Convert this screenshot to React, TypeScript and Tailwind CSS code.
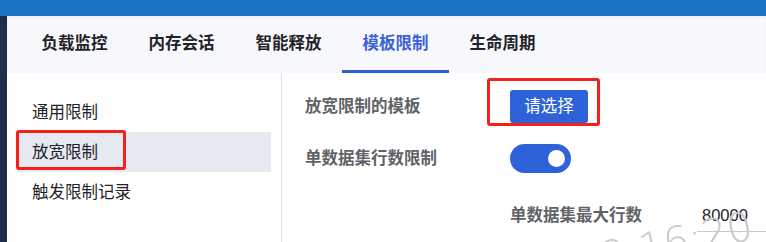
import React from 'react';

const tabs = ['负载监控', '内存会话', '智能释放', '模板限制', '生命周期'];
const menu = ['通用限制', '放宽限制', '触发限制记录'];

export default function App() {
  const active = '模板限制';
  const selected = '放宽限制';

  return (
    <div className="relative w-[766px] h-[242px] overflow-hidden bg-white flex flex-col font-['Liberation_Sans','Noto_Sans_CJK_SC',sans-serif]">
      {/* top bar */}
      <div className="h-4 shrink-0 bg-[#1b74c5]" />

      <div className="flex flex-1 min-h-0">
        <div className="w-[7px] shrink-0 bg-[#1f2d4b]" />

        <div className="flex-1 flex flex-col min-w-0">
          {/* tabs */}
          <div className="h-[57px] shrink-0 bg-[#f7f8fc] flex pl-[14px] shadow-[inset_0_2px_2px_rgba(0,0,0,0.04)]">
            {tabs.map((t) => (
              <div
                key={t}
                className={`px-[20.5px] flex items-center text-[16.5px] font-bold border-b-[3px] ${
                  t === active ? 'text-[#3a62d6] border-[#2d5fd9]' : 'text-[#1f2329] border-transparent'
                }`}
              >
                {t}
              </div>
            ))}
          </div>

          <div className="flex flex-1 min-h-0">
            {/* side menu */}
            <div className="w-[275px] shrink-0 border-r border-[#dcdfe6] pt-[19px] px-[10px]">
              {menu.map((m) => (
                <div
                  key={m}
                  className={`h-10 flex items-center pl-[15px] text-[16.5px] text-[#1f2329] ${
                    m === selected ? 'bg-[#e6e9f0]' : ''
                  }`}
                >
                  {m}
                </div>
              ))}
            </div>

            {/* form */}
            <div className="flex-1 pl-[23px] pt-[17px] text-[16.5px]">
              <div className="flex items-center h-[33px]">
                <span className="w-[205px] font-bold text-[#5f6368]">放宽限制的模板</span>
                <button className="w-[78px] h-[33px] rounded-[3px] bg-[#2d62d9] text-white text-[16.5px]">请选择</button>
              </div>

              <div className="flex items-center h-[29px] mt-[21px]">
                <span className="w-[205px] font-bold text-[#5f6368]">单数据集行数限制</span>
                <div className="w-[61px] h-[29px] rounded-full bg-[#2d62d9] flex items-center justify-end pr-[6px]">
                  <div className="w-[17px] h-[17px] rounded-full bg-white" />
                </div>
              </div>

              <div className="flex items-center h-8 mt-[26px] pl-[205px]">
                <span className="w-[192px] font-bold text-[#5f6368]">单数据集最大行数</span>
                <span className="text-[#1f2329]">80000</span>
              </div>
            </div>
          </div>
        </div>
      </div>

      {/* input underline */}
      <div className="absolute left-[697px] top-[231px] w-[69px] h-px bg-[#c7cad1]" />

      {/* watermark */}
      <div className="absolute left-[600px] top-[221px] -rotate-[12deg] text-[40px] leading-none text-[#c9c9c9] font-['DejaVu_Sans',sans-serif] font-extralight pointer-events-none whitespace-nowrap">
        2 16:20
      </div>

      {/* annotation boxes */}
      <div className="absolute left-[16px] top-[130px] w-[110px] h-[40px] border-[3px] border-[#f5201c] rounded-[3px] pointer-events-none" />
      <div className="absolute left-[487px] top-[78px] w-[113px] h-[48px] border-[3px] border-[#f5201c] rounded-[3px] pointer-events-none" />
    </div>
  );
}
